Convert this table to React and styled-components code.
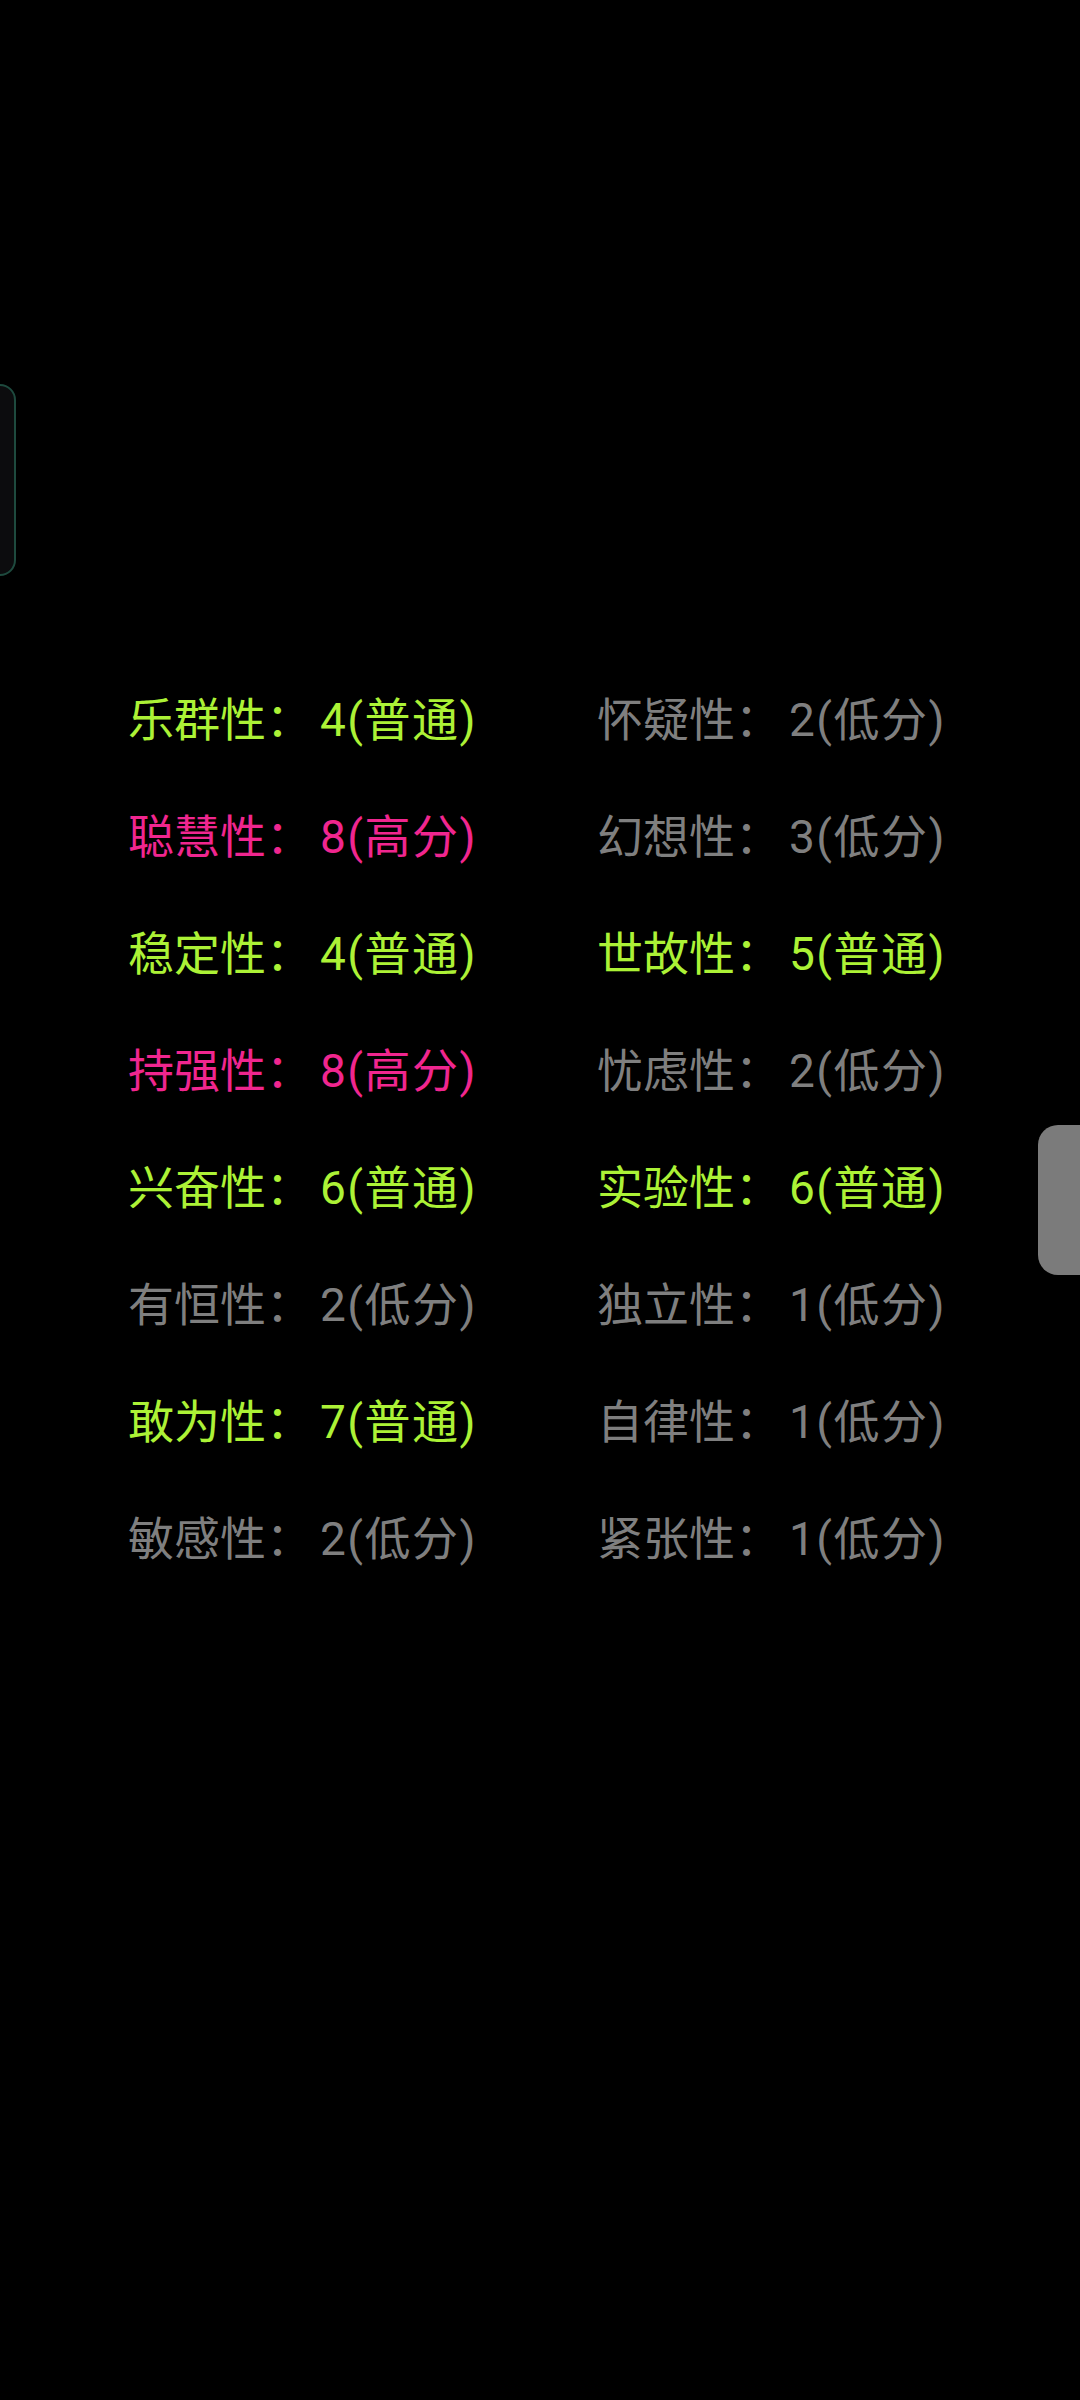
import React from "react";
import styled, { createGlobalStyle } from "styled-components";

const Global = createGlobalStyle`
  html, body { margin: 0; padding: 0; background: #000; }
  body { width: 1080px; min-height: 2400px; overflow: hidden; }
`;

const Screen = styled.div`
  position: relative;
  width: 1080px;
  height: 2400px;
  background: #000;
  overflow: hidden;
  font-family: Roboto, "Noto Sans CJK SC", "Noto Sans", sans-serif;
`;

const EdgePanel = styled.div`
  position: absolute;
  left: -32px;
  top: 384px;
  width: 44px;
  height: 188px;
  border: 2px solid #1e4a3e;
  border-radius: 16px;
  background: #0c0c0e;
`;

const SideTab = styled.div`
  position: absolute;
  left: 1038px;
  top: 1125px;
  width: 70px;
  height: 150px;
  border-radius: 20px;
  background: #7b7b7b;
`;

const Grid = styled.div`
  display: grid;
  grid-template-columns: 469px 400px;
  grid-auto-rows: 117px;
  padding: 662px 0 0 128px;
`;

const Cell = styled.div`
  font-size: 46px;
  line-height: 117px;
  white-space: nowrap;
  color: ${(p) =>
    p.$level === "high" ? "#f0268f" : p.$level === "mid" ? "#acf236" : "#7f7f7f"};
`;

const Score = styled.span`
  margin-left: 8px;
  letter-spacing: 1.5px;
`;

const items = [
  ["乐群性", 4, "普通"],
  ["怀疑性", 2, "低分"],
  ["聪慧性", 8, "高分"],
  ["幻想性", 3, "低分"],
  ["稳定性", 4, "普通"],
  ["世故性", 5, "普通"],
  ["持强性", 8, "高分"],
  ["忧虑性", 2, "低分"],
  ["兴奋性", 6, "普通"],
  ["实验性", 6, "普通"],
  ["有恒性", 2, "低分"],
  ["独立性", 1, "低分"],
  ["敢为性", 7, "普通"],
  ["自律性", 1, "低分"],
  ["敏感性", 2, "低分"],
  ["紧张性", 1, "低分"],
];

const levelOf = (t) => (t === "高分" ? "high" : t === "普通" ? "mid" : "low");

export default function App() {
  return (
    <Screen>
      <Global />
      <EdgePanel />
      <SideTab />
      <Grid>
        {items.map(([name, score, tag]) => (
          <Cell key={name} $level={levelOf(tag)}>
            {name}：<Score>{score}({tag})</Score>
          </Cell>
        ))}
      </Grid>
    </Screen>
  );
}
